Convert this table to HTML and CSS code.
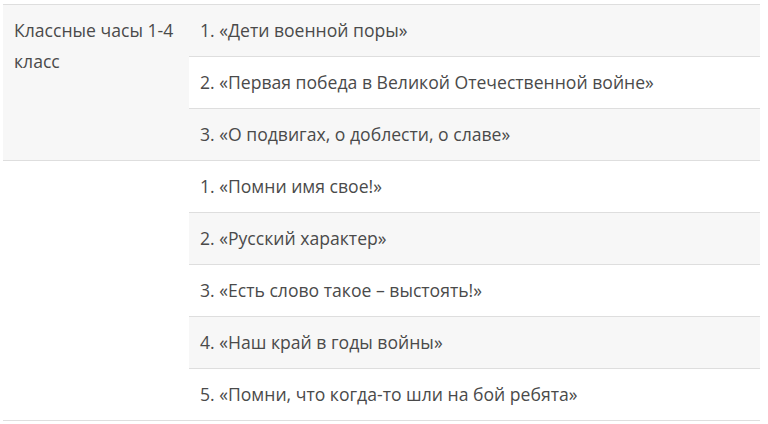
FILE: index.html
```html
<!DOCTYPE html>
<html lang="ru">
<head>
<meta charset="utf-8">
<link rel="stylesheet" href="styles.css">
</head>
<body>
<table class="outer">
  <tr class="grp grp-grey">
    <td class="label">Классные часы 1-4 класс</td>
    <td class="list-cell">
      <table class="inner">
        <tr class="grey"><td>1. «Дети военной поры»</td></tr>
        <tr class="white"><td>2. «Первая победа в Великой Отечественной войне»</td></tr>
        <tr class="grey"><td>3. «О подвигах, о доблести, о славе»</td></tr>
      </table>
    </td>
  </tr>
  <tr class="grp grp-white">
    <td class="label"></td>
    <td class="list-cell">
      <table class="inner">
        <tr class="white"><td>1. «Помни имя свое!»</td></tr>
        <tr class="grey"><td>2. «Русский характер»</td></tr>
        <tr class="white"><td>3. «Есть слово такое – выстоять!»</td></tr>
        <tr class="grey"><td>4. «Наш край в годы войны»</td></tr>
        <tr class="white"><td>5. «Помни, что когда-то шли на бой ребята»</td></tr>
      </table>
    </td>
  </tr>
</table>
</body>
</html>
```
FILE: styles.css
```css
html, body {
  margin: 0;
  background: #fff;
}
body {
  padding: 4px 8px 0 3px;
  font-family: "Open Sans", "Liberation Sans", sans-serif;
  font-size: 17.6px;
  color: #4a4a4a;
}
.outer {
  width: 757px;
  border-collapse: collapse;
  border-spacing: 0;
}
.grp > td {
  border-top: 1px solid #dedede;
  border-bottom: 1px solid #dedede;
  vertical-align: top;
  padding: 0;
}
.grp-grey > td { background: #f7f7f7; }
.grp-white > td { background: #fff; }
.label {
  width: 186px;
  box-sizing: border-box;
  padding: 10px 11px !important;
  line-height: 31px;
}
.inner {
  width: 100%;
  border-collapse: collapse;
  border-spacing: 0;
}
.inner td {
  padding: 10px 11px;
  line-height: 31px;
  border-top: 1px solid #dedede;
}
.inner tr:first-child td { border-top: none; }
.inner .grey td { background: #f7f7f7; }
.inner .white td { background: #fff; }
```
